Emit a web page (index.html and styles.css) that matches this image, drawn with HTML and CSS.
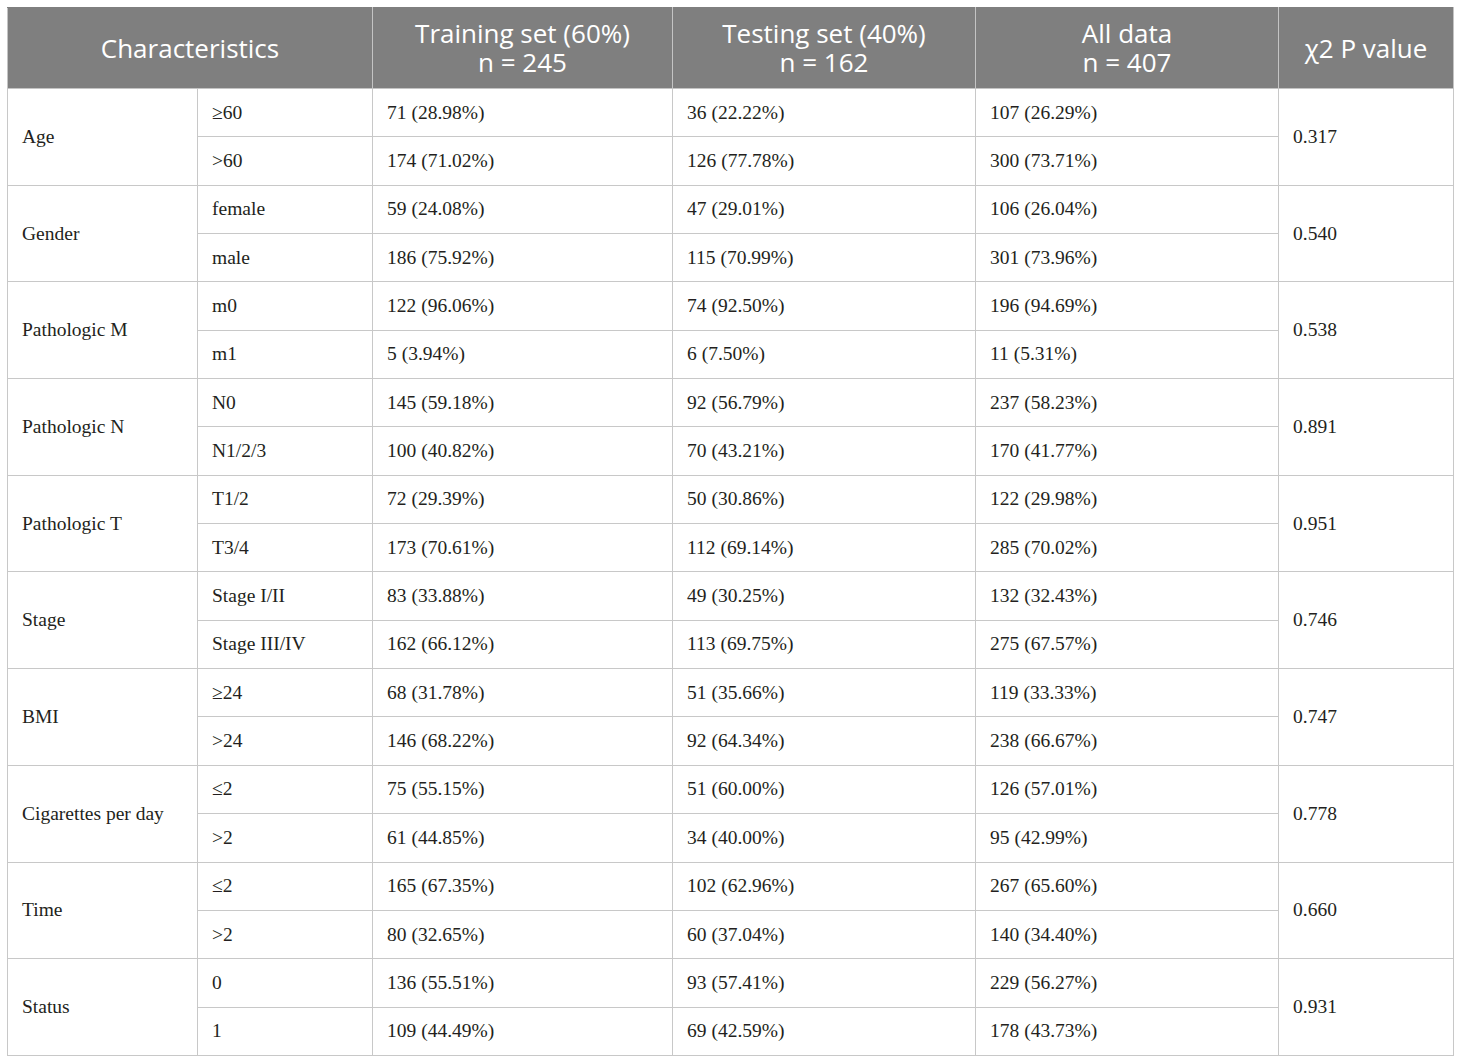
FILE: index.html
```html
<!DOCTYPE html>
<html lang="en">
<head>
  <meta charset="UTF-8">
  <title>Baseline characteristics</title>
  <link rel="stylesheet" href="styles.css">
</head>
<body>
  <table class="data-table">
    <colgroup>
      <col class="c-char">
      <col class="c-sub">
      <col class="c-train">
      <col class="c-test">
      <col class="c-all">
      <col class="c-p">
    </colgroup>
    <thead>
      <tr>
        <th colspan="2">Characteristics</th>
        <th>Training set (60%)<br>n = 245</th>
        <th>Testing set (40%)<br>n = 162</th>
        <th>All data<br>n = 407</th>
        <th>χ2 P value</th>
      </tr>
    </thead>
    <tbody>
      <tr><td rowspan="2">Age</td><td>≥60</td><td>71 (28.98%)</td><td>36 (22.22%)</td><td>107 (26.29%)</td><td rowspan="2">0.317</td></tr>
      <tr><td>&gt;60</td><td>174 (71.02%)</td><td>126 (77.78%)</td><td>300 (73.71%)</td></tr>

      <tr><td rowspan="2">Gender</td><td>female</td><td>59 (24.08%)</td><td>47 (29.01%)</td><td>106 (26.04%)</td><td rowspan="2">0.540</td></tr>
      <tr><td>male</td><td>186 (75.92%)</td><td>115 (70.99%)</td><td>301 (73.96%)</td></tr>

      <tr><td rowspan="2">Pathologic M</td><td>m0</td><td>122 (96.06%)</td><td>74 (92.50%)</td><td>196 (94.69%)</td><td rowspan="2">0.538</td></tr>
      <tr><td>m1</td><td>5 (3.94%)</td><td>6 (7.50%)</td><td>11 (5.31%)</td></tr>

      <tr><td rowspan="2">Pathologic N</td><td>N0</td><td>145 (59.18%)</td><td>92 (56.79%)</td><td>237 (58.23%)</td><td rowspan="2">0.891</td></tr>
      <tr><td>N1/2/3</td><td>100 (40.82%)</td><td>70 (43.21%)</td><td>170 (41.77%)</td></tr>

      <tr><td rowspan="2">Pathologic T</td><td>T1/2</td><td>72 (29.39%)</td><td>50 (30.86%)</td><td>122 (29.98%)</td><td rowspan="2">0.951</td></tr>
      <tr><td>T3/4</td><td>173 (70.61%)</td><td>112 (69.14%)</td><td>285 (70.02%)</td></tr>

      <tr><td rowspan="2">Stage</td><td>Stage I/II</td><td>83 (33.88%)</td><td>49 (30.25%)</td><td>132 (32.43%)</td><td rowspan="2">0.746</td></tr>
      <tr><td>Stage III/IV</td><td>162 (66.12%)</td><td>113 (69.75%)</td><td>275 (67.57%)</td></tr>

      <tr><td rowspan="2">BMI</td><td>≥24</td><td>68 (31.78%)</td><td>51 (35.66%)</td><td>119 (33.33%)</td><td rowspan="2">0.747</td></tr>
      <tr><td>&gt;24</td><td>146 (68.22%)</td><td>92 (64.34%)</td><td>238 (66.67%)</td></tr>

      <tr><td rowspan="2">Cigarettes per day</td><td>≤2</td><td>75 (55.15%)</td><td>51 (60.00%)</td><td>126 (57.01%)</td><td rowspan="2">0.778</td></tr>
      <tr><td>&gt;2</td><td>61 (44.85%)</td><td>34 (40.00%)</td><td>95 (42.99%)</td></tr>

      <tr><td rowspan="2">Time</td><td>≤2</td><td>165 (67.35%)</td><td>102 (62.96%)</td><td>267 (65.60%)</td><td rowspan="2">0.660</td></tr>
      <tr><td>&gt;2</td><td>80 (32.65%)</td><td>60 (37.04%)</td><td>140 (34.40%)</td></tr>

      <tr><td rowspan="2">Status</td><td>0</td><td>136 (55.51%)</td><td>93 (57.41%)</td><td>229 (56.27%)</td><td rowspan="2">0.931</td></tr>
      <tr><td>1</td><td>109 (44.49%)</td><td>69 (42.59%)</td><td>178 (43.73%)</td></tr>
    </tbody>
  </table>
</body>
</html>
```

FILE: styles.css
```css
body {
  margin: 0;
  background-color: #fff;
}
.data-table {
  margin: 7px;
  width: 1447px;
  border-collapse: collapse;
  table-layout: fixed;
  font-family: "Liberation Serif", "Times New Roman", serif;
  font-size: 19.5px;
  color: #231f20;
}
.c-char { width: 190px; }
.c-sub { width: 175px; }
.c-train { width: 300px; }
.c-test { width: 303px; }
.c-all { width: 303px; }
.c-p { width: 175px; }

.data-table th {
  background-color: #7f7f7f;
  color: #fff;
  font-family: "Open Sans", "Noto Sans", sans-serif;
  font-weight: normal;
  font-size: 26px;
  line-height: 29px;
  height: 80px;
  padding: 0 8px;
  text-align: center;
  border: 1px solid #c4c4c4;
  border-top-color: #7f7f7f;
}
.data-table td {
  height: 47.35px;
  padding: 0 14px;
  text-align: left;
  vertical-align: middle;
  border: 1px solid #c8c8c8;
}
```
